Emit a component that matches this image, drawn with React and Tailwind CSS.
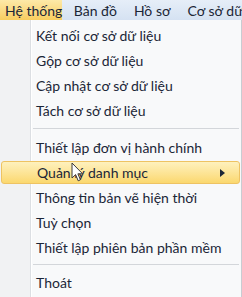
const MENUS = ['Bản đồ', 'Hồ sơ', 'Cơ sở dữ liệu']

const ITEMS = [
  { label: 'Kết nối cơ sở dữ liệu' },
  { label: 'Gộp cơ sở dữ liệu' },
  { label: 'Cập nhật cơ sở dữ liệu' },
  { label: 'Tách cơ sở dữ liệu' },
  { sep: true },
  { label: 'Thiết lập đơn vị hành chính' },
  { label: 'Quản lý danh mục', active: true, sub: true },
  { label: 'Thông tin bản vẽ hiện thời' },
  { label: 'Tuỳ chọn' },
  { label: 'Thiết lập phiên bản phần mềm' },
  { sep: true, tight: true },
  { label: 'Thoát' },
]

function Cursor() {
  return (
    <svg className="absolute left-[71px] top-[162px]" width="13" height="21" viewBox="0 0 13 21">
      <path d="M1 1 L1 16 L4.6 12.6 L7.2 18.8 L9.4 17.8 L6.9 11.8 L11.6 11.8 Z" fill="#fff" stroke="#3a3a3a" strokeWidth="1" strokeLinejoin="round" />
    </svg>
  )
}

export default function App() {
  return (
    <div className="relative w-[242px] h-[297px] overflow-hidden bg-white text-[#1b2637] text-[14px]" style={{ fontFamily: 'Lato, "Noto Sans", sans-serif' }}>
      <div className="flex h-[20px] items-center bg-gradient-to-b from-[#e6eef8] to-[#d5e2f2]">
        <div className="h-full w-[64px] pl-[5px] flex items-center whitespace-nowrap bg-gradient-to-b from-[#fde9a8] to-[#f8cd5e]">
          Hệ thống
        </div>
        <div className="flex pl-[3px]">
          {MENUS.map(m => (
            <div key={m} className="h-full px-[8.5px] flex items-center whitespace-nowrap">
              {m}
            </div>
          ))}
        </div>
      </div>
      <div className="flex flex-col h-[277px] border-r border-[#c8ccd2] pt-[3px] bg-[linear-gradient(to_right,#f1f2f3_0px,#f1f2f3_30px,#dcdfe3_30px,#dcdfe3_31px,#ffffff_31px,#ffffff_32px,#f8f9fa_32px)]">
        {ITEMS.map((it, i) =>
          it.sep ? (
            <div
              key={i}
              className={it.tight
                ? 'shrink-0 ml-[33px] mr-[2px] my-[4px] h-[2px] border-t border-[#d3d6da] border-b-white'
                : 'shrink-0 ml-[33px] mr-[2px] my-[5px] h-[2px] border-t border-[#d3d6da] border-b-white'}
            />
          ) : (
            <div
              key={i}
              className={it.active
                ? 'shrink-0 relative flex items-center h-[23px] my-[1px] mx-[1px] pl-[35px] rounded-[3px] border border-[#eec363] bg-gradient-to-b from-[#fef1bd] to-[#fbd86e]'
                : 'shrink-0 flex items-center h-[25px] pl-[36px]'}
            >
              <span className="whitespace-nowrap">{it.label}</span>
              {it.sub && (
                <svg className="absolute right-[14px]" width="5" height="8" viewBox="0 0 5 8">
                  <path d="M0 0 L5 4 L0 8 Z" fill="#1b2637" />
                </svg>
              )}
            </div>
          )
        )}
      </div>
      <Cursor />
    </div>
  )
}
